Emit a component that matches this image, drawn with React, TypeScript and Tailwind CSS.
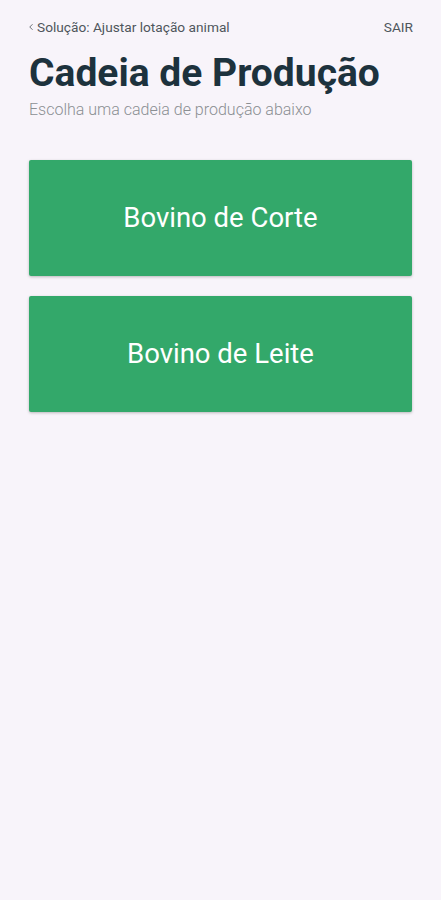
import { ChevronLeft } from 'lucide-react'

const chains = ['Bovino de Corte', 'Bovino de Leite']

export default function App() {
  return (
    <div className="min-h-[900px] w-full bg-[#f8f4fa] px-[29px] font-['Roboto',sans-serif]">
      <div className="flex items-center justify-between pt-[19px] text-[13.7px] leading-4 text-[#4f565c]">
        <button className="flex items-center gap-[1px]">
          <ChevronLeft size={10} strokeWidth={2} className="-ml-[3px]" />
          <span>Solução: Ajustar lotação animal</span>
        </button>
        <button className="-mr-[1px]">SAIR</button>
      </div>
      <h1 className="mt-[15px] text-[39px] font-bold leading-[46px] text-[#1d323d]">Cadeia de Produção</h1>
      <p className="mt-[4px] text-[16px] font-light leading-[20px] text-[#8b8f93]">
        Escolha uma cadeia de produção abaixo
      </p>
      <div className="mt-[40px] flex flex-col gap-[20px]">
        {chains.map((c) => (
          <button
            key={c}
            className="flex h-[116px] w-full items-center justify-center rounded-[2px] bg-[#33a86a] text-[27.5px] text-white shadow-[0_1px_3px_rgba(0,0,0,0.25)]"
          >
            {c}
          </button>
        ))}
      </div>
    </div>
  )
}
